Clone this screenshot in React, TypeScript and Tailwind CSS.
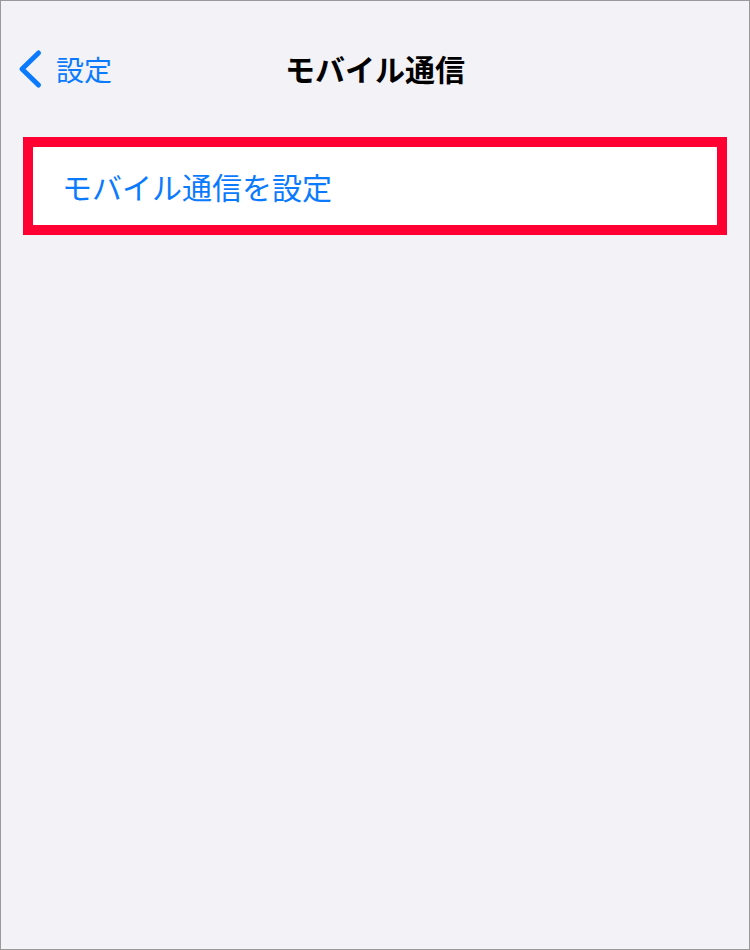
export default function App() {
  return (
    <div
      className="w-[750px] h-[950px] bg-[#f2f2f7] border border-[#999999] flex flex-col"
      style={{ fontFamily: '"Noto Sans CJK JP", "Noto Sans", sans-serif' }}
    >
      {/* Nav bar */}
      <div className="relative h-[136px] pt-[47px]">
        <div className="flex items-center h-[42px] pl-[16px] text-[#0a7aff]">
          <svg width="26" height="40" viewBox="0 0 26 40" fill="none">
            <path
              d="M21.5 4 L5 20 L21.5 36"
              stroke="currentColor"
              strokeWidth="5"
              strokeLinecap="round"
              strokeLinejoin="round"
            />
          </svg>
          <span className="ml-[13px] text-[28px] leading-none">設定</span>
        </div>
        <div className="absolute left-0 right-0 top-[46px] h-[42px] flex items-center justify-center">
          <span className="text-[30px] font-bold leading-none text-black">モバイル通信</span>
        </div>
      </div>

      {/* Highlighted row */}
      <div className="mx-[22px] border-[10px] border-[#ff0033]">
        <div className="bg-white rounded-[4px] h-[78px] flex items-center pl-[29px]">
          <span className="text-[30px] leading-none text-[#0a7aff]">モバイル通信を設定</span>
        </div>
      </div>
    </div>
  );
}
